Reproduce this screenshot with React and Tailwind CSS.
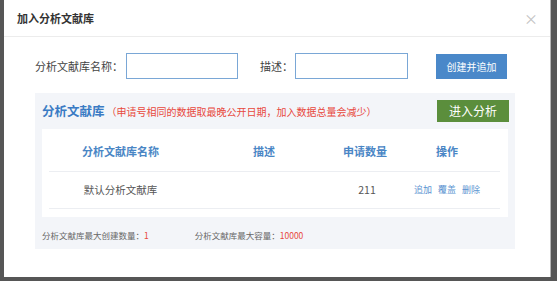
export default function App() {
  const font = { fontFamily: '"Noto Sans CJK SC", "Noto Sans", sans-serif' }
  return (
    <div className="relative h-[281px] w-[557px] overflow-hidden bg-[#565656]" style={font}>
      <div className="ml-[4px] h-[277px] w-[547px] border-r border-[#b5b5b5] bg-white">
        <div className="flex h-[37px] items-center justify-between border-b border-[#ececec] pl-[13px] pr-[12px]">
          <span className="text-[11px] font-bold text-[#333]">加入分析文献库</span>
          <span className="text-[14px] leading-none text-[#c3c3c3]">×</span>
        </div>

        <div className="flex items-center pl-[31px] pt-[16px]">
          <span className="text-[11px] text-[#444]">分析文献库名称：</span>
          <input className="ml-[3px] h-[26px] w-[112px] border border-[#7aa7d6] bg-white outline-none" />
          <span className="ml-[22px] text-[11px] text-[#444]">描述：</span>
          <input className="ml-[2px] h-[26px] w-[113px] border border-[#7aa7d6] bg-white outline-none" />
          <button className="ml-[28px] h-[25px] w-[71px] bg-[#4a88c9] text-[10px] text-white">
            创建并追加
          </button>
        </div>

        <div className="ml-[31px] mt-[14px] h-[156px] w-[480px] bg-[#f3f5f9] px-[7px] pt-[7px]">
          <div className="flex h-[22px] items-center justify-between">
            <div className="flex items-center">
              <span className="text-[12.5px] font-bold text-[#3a7bc4]">分析文献库</span>
              <span className="ml-[2px] text-[10px] text-[#e8483c]">
                （申请号相同的数据取最晚公开日期，加入数据总量会减少）
              </span>
            </div>
            <button className="mr-[-1px] h-[22px] w-[72px] bg-[#5b8e3c] text-[12px] text-white">
              进入分析
            </button>
          </div>

          <div className="mt-[7px] h-[88px] w-[466px] bg-white pl-[7px] pr-[8px]">
            <div className="grid h-[43px] grid-cols-[143px_144px_58px_106px] items-center border-b border-[#eceef2] pt-[2px] text-[11px] font-bold text-[#4a86c5]">
              <span className="text-center">分析文献库名称</span>
              <span className="text-center">描述</span>
              <span className="text-center">申请数量</span>
              <span className="text-center">操作</span>
            </div>
            <div className="grid h-[37px] grid-cols-[143px_144px_58px_106px] items-center border-b border-[#eceef2] text-[10.5px] text-[#555]">
              <span className="text-center">默认分析文献库</span>
              <span className="text-center"></span>
              <span className="pl-[4px] text-center">211</span>
              <span className="flex justify-center gap-[6px] text-[9px] text-[#5b93d1]">
                <span>追加</span>
                <span>覆盖</span>
                <span>删除</span>
              </span>
            </div>
          </div>

          <div className="mt-[12px] flex text-[8.5px] text-[#666]">
            <span>
              分析文献库最大创建数量：<span className="text-[#e8483c]">1</span>
            </span>
            <span className="ml-[46px]">
              分析文献库最大容量：<span className="text-[#e8483c]">10000</span>
            </span>
          </div>
        </div>
      </div>
    </div>
  )
}
